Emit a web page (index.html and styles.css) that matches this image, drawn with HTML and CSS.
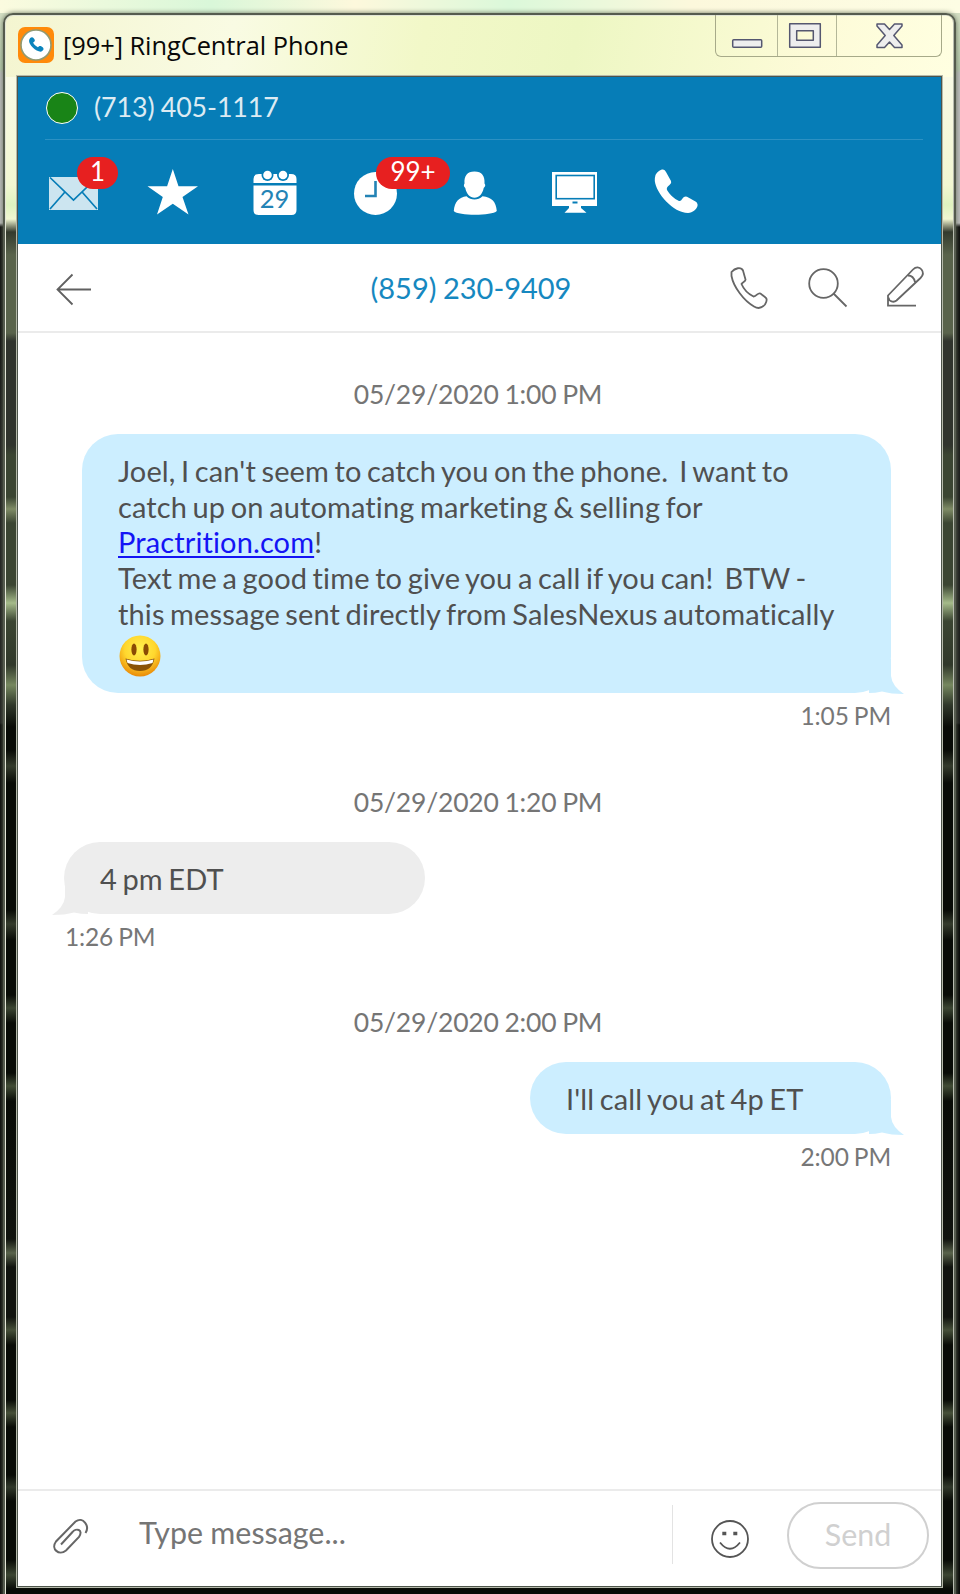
FILE: index.html
```html
<!DOCTYPE html>
<html lang="en">
<head>
<meta charset="utf-8">
<title>RingCentral Phone</title>
<link rel="stylesheet" href="styles.css">
</head>
<body>
<main class="window">
  <header class="titlebar">
    <svg class="app-icon" width="36" height="36" viewBox="0 0 36 36">
      <rect width="36" height="36" rx="7" fill="#ff8a0a"/>
      <circle cx="18" cy="18" r="15" fill="#fff" stroke="#929a72" stroke-width="1.6"/>
      <path transform="translate(9.5 9.5) scale(.4)" d="M4 9C6 2 12-1 16 5C20 10 19 12 14 15C16 20 21 24 26 27C30 23 32 22 38 27C43 32 38 37 33 38C21 38 2 21 4 9Z" fill="#0b84bd"/>
    </svg>
    <h1 class="app-title">[99+] RingCentral Phone</h1>
    <div class="controls">
      <span class="control control-min"><svg width="62" height="42" viewBox="716 15 62 42"><rect x="732.7" y="39.7" width="29" height="7.6" rx="1" fill="#eee" stroke="#555770" stroke-width="1.5"/></svg></span>
      <span class="control control-max"><svg width="59" height="42" viewBox="778 15 59 42"><path fill-rule="evenodd" d="M789.7 23.7H820.3V47.3H789.7ZM796.7 30.7V40.3H813.3V30.7Z" fill="#eee" stroke="#555770" stroke-width="1.5" stroke-linejoin="round"/></svg></span>
      <span class="control control-close"><svg width="104" height="42" viewBox="837 15 104 42"><path d="M877 24H884.500L889.500 29.500L894.500 24H902V26L893.800 35.500L902 45V47.500H894.500L889.500 42L884.500 47.500H877V45L885.200 35.500L877 26Z" fill="#eee" stroke="#555770" stroke-width="1.5" stroke-linejoin="round"/></svg></span>
    </div>
  </header>

  <div class="content">
    <section class="topbar">
      <div class="account"><span class="presence"></span><span class="account-number">(713) 405-1117</span></div>
      <nav class="nav">
        <a class="nav-item">
          <svg width="100" height="103" viewBox="23 141 100 103"><rect x="49" y="177" width="49" height="33" fill="#cce5f0"/><path d="M50 177.500L73.500 200L97 177.500M50 209L64.500 192.500M97 209L82.500 192.500" fill="none" stroke="#067db7" stroke-width="1.700"/></svg>
          <span class="badge badge-one">1</span>
        </a>
        <a class="nav-item"><svg width="100" height="103" viewBox="123 141 100 103"><path d="M172.800 169L178.500 186.200H198L182.500 197L188.500 214.500L172.800 203.700L157 214.500L162.800 197L147.500 186.200H167.100Z" fill="#fff"/></svg></a>
        <a class="nav-item">
          <svg width="100" height="103" viewBox="223 141 100 103"><path d="M259 174H291Q296.500 174 296.500 179V183H253.500V179Q253.500 174 259 174ZM253.500 185.500H296.500V210Q296.500 215 291.500 215H258.500Q253.500 215 253.500 210Z" fill="#fff"/><g fill="#067db7"><circle cx="267.500" cy="175" r="6"/><circle cx="283" cy="175" r="6"/></g><g fill="#fff"><circle cx="267.500" cy="175" r="4.300"/><circle cx="283" cy="175" r="4.300"/></g></svg>
          <span class="calendar-day">29</span>
        </a>
        <a class="nav-item">
          <svg width="100" height="103" viewBox="323 141 100 103"><circle cx="375.500" cy="193.500" r="21.500" fill="#fff"/><path d="M375.500 181V196H365" fill="none" stroke="#2383b5" stroke-width="2.600"/></svg>
          <span class="badge badge-many">99+</span>
        </a>
        <a class="nav-item"><svg width="100" height="103" viewBox="423 141 100 103"><path d="M474.500 171.500C482 171.500 485 176 484.500 183.500C486 185 485 187 483.700 188C482.500 194 479 197.800 474.500 197.800C470 197.800 466.500 194 465.300 188C464 187 463.300 185 464.500 183.500C464 176 467 171.500 474.500 171.500ZM466.500 196.200C471 200.500 478 200.500 482.500 196.200C492 197.500 496 201.500 496.800 211C492 216 458 216 453.800 211C454.500 201.500 459 197.500 466.500 196.200Z" fill="#fff"/></svg></a>
        <a class="nav-item"><svg width="100" height="103" viewBox="523 141 100 103"><rect x="552" y="172" width="45" height="34" fill="#fff"/><rect x="556.200" y="175.500" width="38" height="23.200" fill="#fff" stroke="#067db7" stroke-width="1.600"/><path d="M572.500 201.500H577.500V203.500H572.500Z" fill="#067db7"/><path d="M569 206H581V208L586.500 212.800H564.500L569 208Z" fill="#fff"/></svg></a>
        <a class="nav-item"><svg width="100" height="103" viewBox="623 141 100 103"><path d="M655.500 175C657 172 660 169.500 663 169.500Q665 169.500 666 172L671 181Q672 183 669.500 185Q666 187.500 667 190Q671 197 678.500 200.800Q680.500 202 682.500 198.500Q684 196 687 196.700L695.500 201.500Q698 203 697.500 206C696 210 693 212.500 688 213C673 213 656 193 654.800 181Q654.700 177.500 655.500 175Z" fill="#fff"/></svg></a>
      </nav>
    </section>

    <section class="chat-header">
      <svg class="back" width="100" height="86" viewBox="18 244 100 86"><path d="M91 289.500H57M72.500 274.500L57.500 289.500L72.500 304.500" fill="none" stroke="#606060" stroke-width="1.800"/></svg>
      <h2 class="contact">(859) 230-9409</h2>
      <svg class="actions" width="223" height="86" viewBox="718 244 223 86" fill="none" stroke="#666" stroke-width="1.800">
        <path d="M731.500 272C735 268 741 266.500 743 270.500L745.500 279.500C746 281.500 742.500 282 741.500 284C744 290 748.500 294 753.500 296.500C757 296 757.500 292.500 760.500 293.500L765.500 297.500C767.500 299 766.500 302 765 304.500C762 308 758 309 754 306.500C744 301 733.500 287 731.500 276Z"/>
        <circle cx="823.500" cy="283.500" r="14.300"/><path d="M833.500 293.500L846.500 306.500"/>
        <path d="M916 305.700H888V295.500L913 269.500C916 266.500 919.500 267 921.500 269.500C923.500 272 923.500 275 920.500 278L896.500 300.500C893.500 303 889 301.500 888.500 297.500M908 275.500Q913.500 275.500 915 282"/>
      </svg>
    </section>

    <section class="messages">
      <time class="date">05/29/2020 1:00 PM</time>
      <article class="message sent">
        <div class="bubble bubble-long">Joel, I can't seem to catch you on the phone.&nbsp; I want to<br>catch up on automating marketing &amp; selling for<br><a class="link">Practrition.com</a>!<br>Text me a good time to give you a call if you can!&nbsp; BTW -<br>this message sent directly from SalesNexus automatically
          <svg class="emoji" width="42" height="42" viewBox="0 0 42 42">
            <defs><radialGradient id="face" cx="50%" cy="33%" r="68%"><stop offset="0" stop-color="#fff04f"/><stop offset=".55" stop-color="#ffd72e"/><stop offset="1" stop-color="#e98706"/></radialGradient></defs>
            <circle cx="21" cy="21" r="20.500" fill="url(#face)"/><ellipse cx="15" cy="14.500" rx="2.600" ry="6" fill="#8a4b04"/><ellipse cx="27" cy="14.500" rx="2.600" ry="6" fill="#8a4b04"/><path d="M6.500 23.500Q21 28 35.500 23.500Q33 36 21 36Q9 36 6.500 23.500Z" fill="#8a5305"/><path d="M7.500 24.500Q21 28.500 34.500 24.500L33.500 28Q21 32 8.500 28Z" fill="#fff"/>
          </svg>
        </div>
        <svg class="tail tail-right" width="36" height="36" viewBox="0 0 36 36"><path d="M0 0H22V17Q23 27 35 35Q22 35 13 32.500Q6 34 0 34Z" fill="#cceeff"/></svg>
        <time class="clock">1:05 PM</time>
      </article>

      <time class="date">05/29/2020 1:20 PM</time>
      <article class="message received">
        <div class="bubble bubble-short">4 pm EDT</div>
        <svg class="tail tail-left" width="36" height="36" viewBox="0 0 36 36"><path d="M36 0H13V17Q12 27 0 35Q13 35 22 32.500Q29 34 36 34Z" fill="#ededed"/></svg>
        <time class="clock">1:26 PM</time>
      </article>

      <time class="date">05/29/2020 2:00 PM</time>
      <article class="message sent">
        <div class="bubble bubble-short">I'll call you at 4p ET</div>
        <svg class="tail tail-right" width="36" height="36" viewBox="0 0 36 36"><path d="M0 0H22V17Q23 27 35 35Q22 35 13 32.500Q6 34 0 34Z" fill="#cceeff"/></svg>
        <time class="clock">2:00 PM</time>
      </article>
    </section>

    <footer class="composer">
      <svg class="clip" width="100" height="90" viewBox="18 1490 100 90"><path d="M85.500 1533C90 1526 83 1516 75.500 1521.500L56 1541.500C50.500 1549 59 1556 66 1550.500L79 1537C84 1529 75.500 1528 72.500 1532L61 1544.500" fill="none" stroke="#666" stroke-width="2"/></svg>
      <span class="placeholder">Type message...</span>
      <svg class="smile" width="84" height="60" viewBox="672 1505 84 60" fill="none" stroke="#555" stroke-width="1.800"><circle cx="730" cy="1539" r="18"/><path d="M720 1542.500Q730 1555 740 1542.500"/><path d="M722.300 1533.500H726.300M733.300 1533.500H737.300" stroke-width="3.500"/><path d="M672.500 1505V1564" stroke="#e3e3e3" stroke-width="1"/></svg>
      <button class="send" type="button">Send</button>
    </footer>
  </div>
</main>
</body>
</html>
```

FILE: styles.css
```css
* { box-sizing: border-box; }

body {
  margin: 0;
  width: 960px;
  height: 1594px;
  overflow: hidden;
  padding: 13px 4px 0 3px;
  background:
    linear-gradient(90deg, #fbfbdf, #d9f7d9 22%, #fdf8dc 37%, #dbf8da 53%, #fcf8dc 72%, #fdfde4) 0 0 / 100% 13px no-repeat,
    linear-gradient(#d3dec3 0, #b5c9ac 56px, #bdbdbd 60px 210px, #0d0d0d 214px 330px, #1c1c1c 430px 710px, #050505 712px) 0 13px no-repeat;
  font-family: Lato, "Liberation Sans", sans-serif;
  font-variant-ligatures: none;
}

h1, h2 { margin: 0; font-weight: 400; }
svg { display: block; }

.window {
  height: 1590px;
  padding: 0 12px 0 13px;
  border: 2px solid #555b4e;
  border-radius: 10px 10px 0 0;
  background:
    linear-gradient(100deg, #f4f5d0, #f9fbe3 24%, #f2f8c8 44%, #edf7c3 60%, #fdfbd8 85%, #ffffe1) 0 0 / 100% 62px no-repeat,
    linear-gradient(#f9fae5 62px, #f2f7d2 170px, #dff3c0 190px, #f2f7d2 204px, #343a2d 217px, #59634b 240px, #59634b 318px, #30342d 326px, #30342d 430px, #3b4532 440px, #3b4532 482px, #7f8c66 494px, #3b4532 508px, #3b4532 570px, #a5bb8a 588px, #3b4532 606px, #30382a 650px, #76885f 670px, #30382a 690px, #080b06 712px, #080b06 735px, #343b2c 751px, #080b06 768px, #080b06 895px, #343b2c 909px, #080b06 925px, #080b06 980px, #3b4532 993px, #080b06 1008px, #080b06 1058px, #414c35 1071px, #080b06 1086px, #10130e 1224px, #59634b 1238px, #10130e 1252px, #10130e 1302px, #465039 1315px, #080b06 1330px, #080b06 1385px, #465039 1398px, #080b06 1412px, #080b06 1460px, #30382a 1472px, #080b06 1486px, #080b06 1545px, #3b4532 1560px, #080b06 1574px);
  box-shadow: inset 1px 1px 0 #e2e5d6, inset -1px 0 0 #b8bcb0, 0 0 5px #66705b;
}

.titlebar { display: flex; align-items: flex-start; height: 62px; }
.app-icon { margin-top: 12px; }
.app-title {
  flex: 1;
  margin: 12px 0 0 9px;
  font: 25.4px/36px "Open Sans", sans-serif;
  letter-spacing: -.05px;
  color: #080808;
}
.controls {
  display: flex;
  width: 227px;
  height: 42px;
  border: solid #a7aa89;
  border-width: 0 1px 1px;
  border-radius: 0 0 6px 6px;
}
.control-min, .control-max { border-right: 1px solid #b4b798; }
.control-min { width: 62px; overflow: hidden; }
.control-max { width: 59px; overflow: hidden; }

/* Client area with the double glass edge around it */
.content {
  display: flex;
  flex-direction: column;
  width: 923px;
  height: 1509px;
  outline: 1px solid #b5b9aa;
  outline-offset: 1px;
  box-shadow: 0 0 0 1px #4d554b;
  background: #fff;
}

.topbar { height: 167px; background: #067db7; color: #fff; }
.account {
  display: flex;
  align-items: center;
  height: 63px;
  margin: 0 18px 1px 27px;
  border-bottom: 1px solid #2c91c3;
  gap: 16px;
}
.presence { width: 32px; height: 32px; border: 1.5px solid #fff; border-radius: 50%; background: #198417; margin-left: 1px; }
.account-number { font-size: 26.8px; line-height: 32px; margin-top: -2px; letter-spacing: -.1px; word-spacing: -.5px; color: #dcebf3; }

.nav { display: flex; padding-left: 5px; }
.nav-item { position: relative; width: 100px; }
.badge {
  position: absolute;
  top: 16px;
  height: 32px;
  border-radius: 16px;
  background: #e72020;
  font-size: 26px;
  line-height: 29px;
  text-align: center;
}
.badge-one { left: 54px; width: 41px; }
.badge-many { left: 53px; width: 74px; z-index: 1; }
.calendar-day { position: absolute; top: 41px; left: 30px; width: 43px; text-align: center; font-size: 25.5px; line-height: 32px; color: #2383b5; }

.chat-header { display: flex; height: 89px; border-bottom: 2px solid #ebebeb; }
.back { flex: none; }
.contact { flex: 1; padding-left: 106px; text-align: center; font-size: 29px; line-height: 88px; word-spacing: -1px; color: #1688c0; }
.actions { flex: none; }

.messages { display: flex; flex-direction: column; height: 1156px; padding-top: 43px; }
.date { display: block; width: 920px; text-align: center; font-size: 26.5px; line-height: 36px; letter-spacing: -.2px; word-spacing: -.8px; color: #757575; }
.message { position: relative; display: flex; flex-direction: column; padding-top: 22px; }
.bubble { padding: 19px 36px; border-radius: 36px; font-size: 29px; line-height: 35.7px; letter-spacing: .12px; word-spacing: -2px; color: #505050; white-space: nowrap; }
.sent { align-items: flex-end; margin-right: 50px; height: 371.5px; }
.sent:last-child { height: 140px; }
.received { align-items: flex-start; margin-left: 46px; height: 184.5px; }
.sent .bubble { background: #cceeff; }
.received .bubble { background: #ededed; }
.bubble-long { width: 809px; height: 259px; }
.bubble-short { width: 361px; height: 72px; }
.link { color: #1414f5; text-decoration: underline; text-decoration-thickness: 2px; text-underline-offset: 3px; }
.emoji { margin-top: 3px; margin-left: 1px; }
.tail { position: absolute; }
.tail-right { right: -14px; top: 247px; }
.sent:last-child .tail-right { top: 60px; }
.tail-left { left: -12px; top: 60px; }
.clock { font-size: 24.5px; line-height: 32px; margin-top: 7px; letter-spacing: -.15px; word-spacing: -1px; color: #777; }
.received .clock { margin-left: 1px; }

.composer { display: flex; align-items: flex-start; flex: 1; border-top: 2px solid #ebebeb; }
.clip { flex: none; margin-top: -1px; }
.placeholder { width: 554px; padding-left: 21px; font-size: 30.4px; line-height: 83px; word-spacing: -.5px; color: #757575; }
.smile { flex: none; margin-top: 14px; }
.send {
  margin: 11px 0 0 31px;
  width: 142px;
  height: 67px;
  padding: 0 0 3px;
  border: 2px solid #d0d0d0;
  border-radius: 34px;
  background: #fff;
  font: 30.4px Lato, sans-serif;
  color: #d0d0d0;
}
```
